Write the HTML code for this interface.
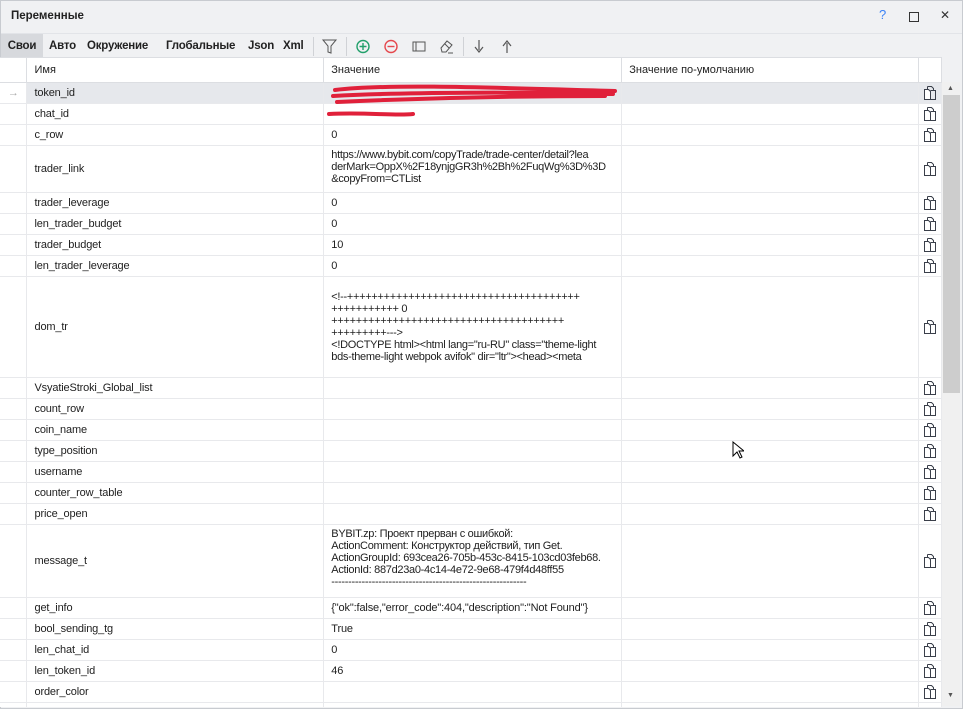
<!DOCTYPE html><html><head><meta charset="utf-8"><style>
body{margin:0;width:963px;height:709px;background:#fff;font-family:"Liberation Sans",sans-serif;font-size:11px;color:#1e1e1e;overflow:hidden;position:relative}
.win{position:absolute;left:0;top:0;width:961px;height:707px;border:1px solid #c8cbd0;background:#f0f1f3}
.title{position:absolute;left:10px;top:9px;font-weight:bold;font-size:11.5px;color:#222}
.tb{position:absolute;top:32px;left:0;height:25px;width:961px;background:#f0f1f3;border-top:1px solid #e2e4e8}
.tab{position:absolute;top:0;height:25px;line-height:24px;font-weight:bold;font-size:11.5px;color:#222;letter-spacing:-0.2px}
.grid{position:absolute;left:0;top:57px;width:942px;height:650px;background:#fff;overflow:hidden}
table{border-collapse:collapse;table-layout:fixed}
td{border:1px solid #e8e9ec;padding:0 7px;vertical-align:middle;white-space:nowrap;overflow:hidden;font-size:11px;letter-spacing:-0.15px}
td.g{border-left:none;padding:0;background:#fff}
th{font-weight:normal;text-align:left;padding:0 7px;border:1px solid #dcdee2;background:#fff;height:24px;font-size:11px;color:#222}
.ml{vertical-align:top;padding-top:6px;line-height:12px;letter-spacing:-0.3px}
.sb{position:absolute;left:942px;top:82px;width:18px;height:624px;background:#f0f0f0}
.thumb{position:absolute;left:1px;top:13px;width:17px;height:298px;background:#cdcdcd}
.sel td{background:#e6e8ec}
.cp{padding:0;text-align:center;line-height:0}
</style></head><body>
<svg width="0" height="0" style="position:absolute"><defs><symbol id="c" viewBox="0 0 14 14"><path d="M4.5 0.5h4l2 2v2" fill="none" stroke="#3a3f4a"/><path d="M4.5 0.5v3M1.5 3.5h4l2 2v8h-6z" fill="#fff" stroke="#3a3f4a"/><path d="M7.5 4.5h5v9h-5" fill="none" stroke="#3a3f4a"/></symbol></defs></svg>
<div class="win">
<div class="title">Переменные</div>
<div style="position:absolute;left:878px;top:6px;color:#3b82f6;font-size:13px">?</div>
<div style="position:absolute;left:908px;top:11px;width:8px;height:8px;border:1px solid #333"></div>
<div style="position:absolute;left:939px;top:7px;font-size:12px;color:#333">✕</div>
<div class="tb">
<div class="tab" style="left:0;width:42px;background:#d7d9dd;text-align:center">Свои</div>
<div class="tab" style="left:48px">Авто</div>
<div class="tab" style="left:86px">Окружение</div>
<div class="tab" style="left:165px">Глобальные</div>
<div class="tab" style="left:247px">Json</div>
<div class="tab" style="left:282px">Xml</div>
<svg style="position:absolute;left:0;top:0" width="530" height="25">
<line x1="312.5" y1="3" x2="312.5" y2="22" stroke="#d0d2d6"/>
<line x1="345.5" y1="3" x2="345.5" y2="22" stroke="#d0d2d6"/>
<line x1="462.5" y1="3" x2="462.5" y2="22" stroke="#d0d2d6"/>
<path d="M322 6h13l-5 6v7l-3-1v-6z" fill="none" stroke="#555" stroke-width="1"/>
<circle cx="362" cy="12.5" r="6" fill="none" stroke="#22a06b" stroke-width="1.4"/><path d="M362 9v7M358.5 12.5h7" stroke="#22a06b" stroke-width="1.4"/>
<circle cx="390" cy="12.5" r="6" fill="none" stroke="#e5484d" stroke-width="1.4"/><path d="M386.5 12.5h7" stroke="#e5484d" stroke-width="1.4"/>
<path d="M412 8h12v9h-12zM415 8v9" fill="none" stroke="#555"/>
<path d="M440 14l6-7 5 4-6 7h-4zM444 10l4 4M447 19h5" fill="none" stroke="#555"/>
<path d="M478 6v10M474 13l4 5 4-5" fill="none" stroke="#555" stroke-width="1.2"/>
<path d="M506 19v-10M502 12l4-5 4 5" fill="none" stroke="#555" stroke-width="1.2"/>
</svg>
</div>
</div>
<div class="grid">
<table>
<colgroup><col style="width:27px"><col style="width:297px"><col style="width:298px"><col style="width:297px"><col style="width:23px"></colgroup>
<tr><th style="background:#fff;border-left:none"></th><th>Имя</th><th>Значение</th><th>Значение по-умолчанию</th><th></th></tr>
<tr class="sel" style="height:21px"><td class="g" style="background:#fff;color:#aaa;text-align:center">→</td><td>token_id</td><td></td><td></td><td class="cp"><svg width="14" height="14"><use href="#c"/></svg></td></tr>
<tr style="height:21px"><td class="g"></td><td>chat_id</td><td></td><td></td><td class="cp"><svg width="14" height="14"><use href="#c"/></svg></td></tr>
<tr style="height:21px"><td class="g"></td><td>c_row</td><td>0</td><td></td><td class="cp"><svg width="14" height="14"><use href="#c"/></svg></td></tr>
<tr style="height:47px"><td class="g"></td><td>trader_link</td><td class="ml" style="padding-top:3px">https://www.bybit.com/copyTrade/trade-center/detail?lea<br>derMark=OppX%2F18ynjgGR3h%2Bh%2FuqWg%3D%3D<br>&amp;copyFrom=CTList</td><td></td><td class="cp"><svg width="14" height="14"><use href="#c"/></svg></td></tr>
<tr style="height:21px"><td class="g"></td><td>trader_leverage</td><td>0</td><td></td><td class="cp"><svg width="14" height="14"><use href="#c"/></svg></td></tr>
<tr style="height:21px"><td class="g"></td><td>len_trader_budget</td><td>0</td><td></td><td class="cp"><svg width="14" height="14"><use href="#c"/></svg></td></tr>
<tr style="height:21px"><td class="g"></td><td>trader_budget</td><td>10</td><td></td><td class="cp"><svg width="14" height="14"><use href="#c"/></svg></td></tr>
<tr style="height:21px"><td class="g"></td><td>len_trader_leverage</td><td>0</td><td></td><td class="cp"><svg width="14" height="14"><use href="#c"/></svg></td></tr>
<tr style="height:101px"><td class="g"></td><td>dom_tr</td><td class="ml" style="padding-top:14px">&lt;!--++++++++++++++++++++++++++++++++++++++<br>+++++++++++ 0<br>++++++++++++++++++++++++++++++++++++++<br>+++++++++---&gt;<br>&lt;!DOCTYPE html&gt;&lt;html lang="ru-RU" class="theme-light<br>bds-theme-light webpok avifok" dir="ltr"&gt;&lt;head&gt;&lt;meta</td><td></td><td class="cp"><svg width="14" height="14"><use href="#c"/></svg></td></tr>
<tr style="height:21px"><td class="g"></td><td>VsyatieStroki_Global_list</td><td></td><td></td><td class="cp"><svg width="14" height="14"><use href="#c"/></svg></td></tr>
<tr style="height:21px"><td class="g"></td><td>count_row</td><td></td><td></td><td class="cp"><svg width="14" height="14"><use href="#c"/></svg></td></tr>
<tr style="height:21px"><td class="g"></td><td>coin_name</td><td></td><td></td><td class="cp"><svg width="14" height="14"><use href="#c"/></svg></td></tr>
<tr style="height:21px"><td class="g"></td><td>type_position</td><td></td><td></td><td class="cp"><svg width="14" height="14"><use href="#c"/></svg></td></tr>
<tr style="height:21px"><td class="g"></td><td>username</td><td></td><td></td><td class="cp"><svg width="14" height="14"><use href="#c"/></svg></td></tr>
<tr style="height:21px"><td class="g"></td><td>counter_row_table</td><td></td><td></td><td class="cp"><svg width="14" height="14"><use href="#c"/></svg></td></tr>
<tr style="height:21px"><td class="g"></td><td>price_open</td><td></td><td></td><td class="cp"><svg width="14" height="14"><use href="#c"/></svg></td></tr>
<tr style="height:73px"><td class="g"></td><td>message_t</td><td class="ml" style="padding-top:3px">BYBIT.zp: Проект прерван с ошибкой:<br>ActionComment: Конструктор действий, тип Get.<br>ActionGroupId: 693cea26-705b-453c-8415-103cd03feb68.<br>ActionId: 887d23a0-4c14-4e72-9e68-479f4d48ff55<br>----------------------------------------------------------</td><td></td><td class="cp"><svg width="14" height="14"><use href="#c"/></svg></td></tr>
<tr style="height:21px"><td class="g"></td><td>get_info</td><td>{"ok":false,"error_code":404,"description":"Not Found"}</td><td></td><td class="cp"><svg width="14" height="14"><use href="#c"/></svg></td></tr>
<tr style="height:21px"><td class="g"></td><td>bool_sending_tg</td><td>True</td><td></td><td class="cp"><svg width="14" height="14"><use href="#c"/></svg></td></tr>
<tr style="height:21px"><td class="g"></td><td>len_chat_id</td><td>0</td><td></td><td class="cp"><svg width="14" height="14"><use href="#c"/></svg></td></tr>
<tr style="height:21px"><td class="g"></td><td>len_token_id</td><td>46</td><td></td><td class="cp"><svg width="14" height="14"><use href="#c"/></svg></td></tr>
<tr style="height:21px"><td class="g"></td><td>order_color</td><td></td><td></td><td class="cp"><svg width="14" height="14"><use href="#c"/></svg></td></tr>
<tr style="height:21px"><td class="g"></td><td></td><td></td><td></td><td class="cp"></td></tr>
</table>
</div>
<svg style="position:absolute;left:325px;top:82px" width="300" height="40">
<path d="M10 8 C60 2 150 5 290 9 M8 14 C80 10 200 10 288 12 M12 20 C100 16 200 14 280 14 M4 32 C40 30 70 34 88 32" stroke="#e0203a" stroke-width="4" fill="none" stroke-linecap="round"/>
</svg>
<div class="sb"><div style="position:absolute;left:5px;top:3px;font-size:7px;color:#555">▲</div><div class="thumb"></div><div style="position:absolute;left:5px;top:610px;font-size:7px;color:#555">▼</div></div>
<svg style="position:absolute;left:732px;top:441px" width="12" height="18"><path d="M1 1v14l4-4 3 6 2-1-3-6h5z" fill="#fff" stroke="#000"/></svg>
</body></html>
